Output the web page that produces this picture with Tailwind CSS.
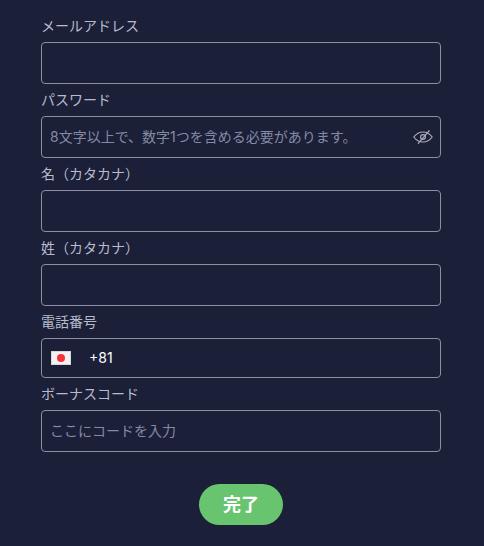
<!DOCTYPE html>
<html lang="ja">
<head>
  <meta charset="UTF-8" />
  <meta name="viewport" content="width=device-width, initial-scale=1.0" />
  <title>登録</title>
  <script src="https://cdn.jsdelivr.net/npm/@tailwindcss/browser@4"></script>
</head>
<body class="bg-[#1b1f38] h-[546px] overflow-hidden font-['Inter','Noto_Sans_CJK_JP',sans-serif]">
  <form class="w-[400px] ml-[41px] pt-[16px]">
    <!-- email -->
    <label class="block h-[26px] text-sm leading-[20px] text-[#b7bbcb]">メールアドレス</label>
    <input type="text" class="block w-full h-[42px] px-[9px] mb-[6px] bg-transparent border border-[#8c8fa3] rounded text-sm" />

    <!-- password -->
    <label class="block h-[26px] text-sm leading-[20px] text-[#b7bbcb]">パスワード</label>
    <div class="flex items-center justify-between h-[42px] pl-[8px] pr-[7px] mb-[6px] border border-[#8c8fa3] rounded">
      <span class="text-sm text-[#858aa3]">8文字以上で、数字1つを含める必要があります。</span>
      <svg class="w-[20px] h-[14px]" viewBox="0 0 20 14" fill="none" stroke="#a9acba" stroke-width="1.2">
        <path d="M.8 7C3.500 3.400 6.500 2 10 2S16.500 3.400 19.200 7C16.500 10.600 13.500 12 10 12S3.500 10.600.8 7Z" />
        <circle cx="10" cy="7" r="2.400" />
        <path d="M16.500 .3L5 13.700" />
      </svg>
    </div>

    <!-- first name -->
    <label class="block h-[26px] text-sm leading-[20px] text-[#b7bbcb]">名（カタカナ）</label>
    <input type="text" class="block w-full h-[42px] px-[9px] mb-[6px] bg-transparent border border-[#8c8fa3] rounded text-sm" />

    <!-- last name -->
    <label class="block h-[26px] text-sm leading-[20px] text-[#b7bbcb]">姓（カタカナ）</label>
    <input type="text" class="block w-full h-[42px] px-[9px] mb-[6px] bg-transparent border border-[#8c8fa3] rounded text-sm" />

    <!-- phone -->
    <label class="block h-[26px] text-sm leading-[20px] text-[#b7bbcb]">電話番号</label>
    <div class="flex items-center h-[40px] pl-[9px] mb-[6px] border border-[#8c8fa3] rounded">
      <span class="flex items-center justify-center w-[20px] h-[14px] bg-[#f2f2f2] border border-[#d8d8d8]">
        <span class="w-[8px] h-[8px] rounded-full bg-[#f5333a]"></span>
      </span>
      <span class="ml-[18px] text-sm text-white">+81</span>
    </div>

    <!-- bonus code -->
    <label class="block h-[26px] text-sm leading-[20px] text-[#b7bbcb]">ボーナスコード</label>
    <div class="flex items-center h-[42px] pl-[8px] border border-[#8c8fa3] rounded">
      <span class="text-sm text-[#858aa3]">ここにコードを入力</span>
    </div>

    <div class="flex justify-center mt-[32px]">
      <button type="button" class="w-[84px] h-[41px] rounded-full bg-[#69c46f] text-white font-bold text-lg">完了</button>
    </div>
  </form>
</body>
</html>
